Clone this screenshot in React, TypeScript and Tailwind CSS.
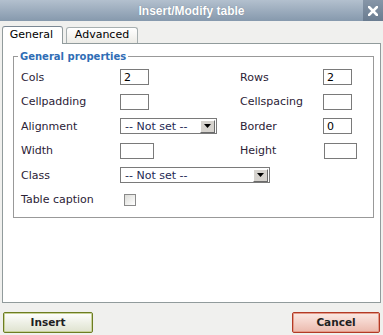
import React from "react";

function TextInput({ value = "", w = "w-[29px]" }: { value?: string; w?: string }) {
  return (
    <div
      className={`flex h-[16px] items-center border border-[#7a7a7a] bg-white pl-[3px] text-[11px] leading-none text-black ${w}`}
    >
      {value}
    </div>
  );
}

function FakeSelect({ w }: { w: string }) {
  return (
    <div className={`flex h-[16px] items-center border border-[#7a7a7a] bg-white ${w}`}>
      <span className="flex-1 pl-[4px] text-[11px] leading-none text-[#1e2a55]">-- Not set --</span>
      <span className="mr-[1px] flex h-[13px] w-[15px] items-center justify-center border border-t-white border-l-white border-r-[#6b6b6b] border-b-[#6b6b6b] bg-[#d6d3ce]">
        <svg width="7" height="4" viewBox="0 0 7 4">
          <path d="M0 0h7L3.5 4z" fill="#000" />
        </svg>
      </span>
    </div>
  );
}

export default function App() {
  const label = "text-[11px] leading-none text-[#2b2236]";
  return (
    <div className="h-[335px] w-[383px] overflow-hidden bg-[#f0f0ee] font-['DejaVu_Sans',Verdana,sans-serif]">
      {/* title bar */}
      <div className="flex h-[21px] items-stretch bg-gradient-to-b from-[#b3c0ce] to-[#8699ad]">
        <div className="flex flex-1 items-center justify-center pl-[20px] font-['Liberation_Sans',Arial,sans-serif] text-[12px] font-bold text-white [text-shadow:0_0_1px_#6a7a8c]">
          Insert/Modify table
        </div>
        <div className="flex w-[20px] items-center justify-center bg-gradient-to-b from-[#8796a8] to-[#6a7c90]">
          <svg width="10" height="10" viewBox="0 0 10 10">
            <path d="M1 1l8 8M9 1l-8 8" stroke="#fff" strokeWidth="2.6" strokeLinecap="square" />
          </svg>
        </div>
      </div>

      {/* tabs */}
      <div className="mt-[5px] flex h-[17px] items-end gap-[3px] pl-[2px]">
        <div className="relative z-10 -mb-px flex h-[18px] w-[61px] items-center justify-center rounded-t-[3px] border border-b-0 border-[#919b9c] border-t-[#7b8894] bg-white pr-[2px] text-[11px] text-black">
          General
        </div>
        <div className="flex h-[16px] w-[72px] items-center justify-center rounded-t-[3px] border border-b-0 border-[#a7afb0] bg-gradient-to-b from-white to-[#ecebe6] text-[11px] text-black">
          Advanced
        </div>
      </div>

      {/* panel */}
      <div className="ml-[2px] h-[260px] w-[379px] border border-[#919b9c] bg-white">
        <fieldset className="ml-[10px] mt-[6px] w-[361px] border border-[#999999] pb-[5px]">
          <legend className="ml-[4px] px-[2px] text-[10px] font-bold leading-[13px] text-[#2f6db5]">
            General properties
          </legend>
          <div className="grid grid-cols-[99px_120px_83px_1fr] auto-rows-[24.5px] items-center pl-[7px] pt-[2px]">
            <span className={label}>Cols</span>
            <TextInput value="2" />
            <span className={label}>Rows</span>
            <TextInput value="2" />

            <span className={label}>Cellpadding</span>
            <TextInput />
            <span className={label}>Cellspacing</span>
            <TextInput />

            <span className={label}>Alignment</span>
            <FakeSelect w="w-[97px]" />
            <span className={label}>Border</span>
            <TextInput value="0" />

            <span className={label}>Width</span>
            <TextInput w="w-[34px]" />
            <span className={label}>Height</span>
            <div className="pl-px">
              <TextInput w="w-[33px]" />
            </div>

            <span className={label}>Class</span>
            <div className="col-span-3">
              <FakeSelect w="w-[150px]" />
            </div>

            <span className={label}>Table caption</span>
            <div className="col-span-3 pl-[4px]">
              <div className="h-[12px] w-[12px] border border-[#8a8a8a] bg-gradient-to-br from-[#dcdcd8] to-white" />
            </div>
          </div>
        </fieldset>
      </div>

      {/* buttons */}
      <div className="mt-[9px] flex justify-between pl-[3px] pr-[3px]">
        <button className="h-[21px] w-[90px] rounded-[2px] border border-[#6d7d22] bg-gradient-to-b from-white via-[#eef0e6] to-[#dfe3cf] text-[10.5px] font-bold text-[#1f1f1f] shadow-[inset_0_0_0_1px_#c9d29a]">
          Insert
        </button>
        <button className="h-[21px] w-[88px] rounded-[2px] border border-[#b23a26] bg-gradient-to-b from-[#fbe9e4] via-[#f4d2c9] to-[#ebb9ad] text-[10.5px] font-bold text-[#1f1f1f] shadow-[inset_0_0_0_1px_#e59a89]">
          Cancel
        </button>
      </div>
    </div>
  );
}
